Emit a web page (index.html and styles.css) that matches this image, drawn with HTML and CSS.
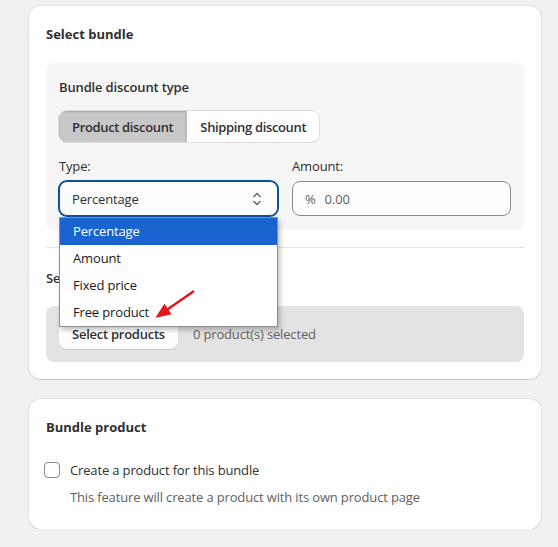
FILE: index.html
```html
<!DOCTYPE html>
<html lang="en">

<head>
    <meta charset="UTF-8">
    <meta name="viewport" content="width=device-width, initial-scale=1.0">
    <title>Bundle settings</title>
    <link rel="stylesheet" href="styles.css">
</head>

<body>
    <div class="page">

        <!-- Select bundle card -->
        <section class="card">
            <h2 class="card-title">Select bundle</h2>

            <div class="panel">
                <h3 class="panel-title">Bundle discount type</h3>

                <div class="segmented">
                    <button class="seg-btn active">Product discount</button>
                    <button class="seg-btn">Shipping discount</button>
                </div>

                <div class="fields">
                    <div class="field">
                        <label class="field-label">Type:</label>
                        <div class="select-wrap">
                            <div class="select-box focused">
                                <span>Percentage</span>
                                <svg class="chevron" width="10" height="14" viewBox="0 0 10 14">
                                    <path d="M1.5 5 L5 1.5 L8.5 5" />
                                    <path d="M1.5 9 L5 12.5 L8.5 9" />
                                </svg>
                            </div>
                            <ul class="dropdown">
                                <li class="selected">Percentage</li>
                                <li>Amount</li>
                                <li>Fixed price</li>
                                <li>Free product</li>
                                <svg class="arrow" width="44" height="34" viewBox="0 0 44 34">
                                    <line x1="40" y1="3" x2="13" y2="21.7" />
                                    <polygon points="4,28 15.6,25.4 10.5,18" />
                                </svg>
                            </ul>
                        </div>
                    </div>
                    <div class="field">
                        <label class="field-label">Amount:</label>
                        <div class="input-box">
                            <span class="prefix">%</span>
                            <span class="placeholder">0.00</span>
                        </div>
                    </div>
                </div>
            </div>

            <hr class="divider">

            <h3 class="section-title">Select products</h3>
            <div class="products-box">
                <button class="plain-btn">Select products</button>
                <span class="muted">0 product(s) selected</span>
            </div>
        </section>

        <!-- Bundle product card -->
        <section class="card card-bottom">
            <h2 class="card-title">Bundle product</h2>
            <div class="check-row">
                <span class="checkbox"></span>
                <span>Create a product for this bundle</span>
            </div>
            <p class="help-text">This feature will create a product with its own product page</p>
        </section>

    </div>
</body>

</html>
```

FILE: styles.css
```css
* {
    box-sizing: border-box;
}

body {
    margin: 0;
    background-color: #f1f1f1;
    font-family: "Open Sans", "Noto Sans", sans-serif;
    font-size: 13px;
    line-height: 20px;
    letter-spacing: -0.15px;
    color: #303030;
}

.page {
    width: 512px;
    margin-left: 29px;
    padding-top: 6px;
}

.card {
    background: #fff;
    border-radius: 12px;
    padding: 18px 17px 17px;
    box-shadow: 0 0 0 1px rgba(0, 0, 0, 0.06), 0 1px 1px rgba(0, 0, 0, 0.1);
}

.card-bottom {
    margin-top: 20px;
    padding-bottom: 22px;
}

.card-title {
    margin: 0;
    font-size: 13px;
    font-weight: 700;
    line-height: 20px;
    letter-spacing: 0;
}

.panel {
    margin-top: 19px;
    background: #f6f6f6;
    border-radius: 8px;
    padding: 14px 13px;
}

.panel-title,
.section-title {
    margin: 0;
    font-size: 13px;
    font-weight: 600;
    line-height: 20px;
}

/* segmented buttons */
.segmented {
    display: inline-flex;
    margin-top: 14px;
    border-radius: 8px;
    overflow: hidden;
    box-shadow: 0 0 0 1px #dcdcdc, 0 1px 0 #c4c4c4;
}

.seg-btn {
    font: inherit;
    font-weight: 600;
    letter-spacing: -0.35px;
    color: #303030;
    height: 31px;
    padding: 0 13px;
    border: none;
    background: #fff;
    cursor: pointer;
}

.seg-btn.active {
    background: #c8c8c8;
    box-shadow: inset 0 1px 2px rgba(0, 0, 0, 0.2);
    border-right: 1px solid #bdbdbd;
}

/* type + amount fields */
.fields {
    display: grid;
    grid-template-columns: 1fr 1fr;
    gap: 14px;
    margin-top: 14px;
}

.field-label {
    display: block;
    line-height: 20px;
    margin-bottom: 5px;
}

.select-wrap {
    position: relative;
}

.select-box,
.input-box {
    height: 35px;
    border: 1px solid #8a8a8a;
    border-radius: 8px;
    background: #fdfdfd;
    display: flex;
    align-items: center;
    padding: 0 12px;
}

.select-box {
    justify-content: space-between;
}

.select-box.focused {
    border-color: #0b4fa0;
    box-shadow: 0 0 0 1px #0b4fa0;
}

.chevron {
    margin-right: 3px;
    fill: none;
    stroke: #616161;
    stroke-width: 1.3;
}

.prefix {
    color: #616161;
    margin-right: 9px;
}

.placeholder {
    color: #616161;
}

/* open dropdown list */
.dropdown {
    position: absolute;
    left: 0;
    right: 0;
    top: 36px;
    margin: 0;
    padding: 0;
    list-style: none;
    background: #fff;
    border: 1px solid #8f8f8f;
    box-shadow: 2px 3px 5px rgba(0, 0, 0, 0.25);
    z-index: 5;
}

.dropdown li {
    height: 27px;
    line-height: 27px;
    padding-left: 13px;
    color: #1a1a1a;
}

.dropdown li.selected {
    background: #1a64d0;
    color: #fff;
}

.arrow {
    position: absolute;
    left: 94px;
    top: 70px;
    stroke: #e5141c;
    stroke-width: 2.4;
    fill: #e5141c;
}

.divider {
    border: none;
    border-top: 1px solid #e3e3e3;
    margin: 17px 0 0;
}

.section-title {
    margin-top: 20px;
}

.products-box {
    margin-top: 18px;
    background: #e3e3e3;
    border-radius: 8px;
    padding: 13px;
    display: flex;
    align-items: center;
    gap: 15px;
}

.plain-btn {
    font: inherit;
    font-weight: 600;
    letter-spacing: -0.25px;
    color: #303030;
    height: 30px;
    padding: 0 13px;
    border: none;
    border-radius: 8px;
    background: #fff;
    box-shadow: 0 1px 0 #c9c9c9;
}

.muted {
    color: #616161;
}

/* checkbox row */
.check-row {
    display: flex;
    align-items: center;
    gap: 10px;
    margin-top: 23px;
    margin-left: -2px;
}

.checkbox {
    width: 16px;
    height: 16px;
    border: 1px solid #8a8a8a;
    border-radius: 4px;
    background: #fff;
}

.help-text {
    margin: 7px 0 0 24px;
    color: #616161;
}
```
